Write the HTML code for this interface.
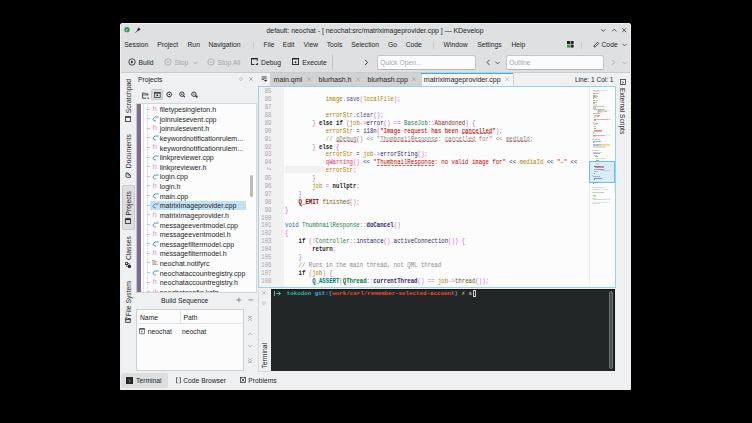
<!DOCTYPE html><html><head><meta charset="utf-8"><style>
html,body{margin:0;padding:0;background:#000;width:752px;height:423px;overflow:hidden}
body{position:relative;font-family:"Liberation Sans",sans-serif}
div{position:absolute;box-sizing:border-box}
.t{white-space:pre}
svg{position:absolute;overflow:visible}

</style></head><body>
<div style="left:120px;top:23px;width:511px;height:366.8px;background:#dee0e2;border:1px solid #eceeef;border-radius:2px 2px 0 0"></div>
<svg style="left:123.5px;top:27.3px" width="7" height="7"><circle cx="3" cy="2.7" r="2.65" fill="#2a9a4c"/><path d="M2.2 4.3 Q2.1 2.5 3.9 2.3" stroke="#e8f6ec" stroke-width="0.75" fill="none"/></svg>
<svg style="left:134.5px;top:26.8px" width="7" height="7"><path d="M0.6 5.6 L2.4 3.8" stroke="#232627" stroke-width="0.8"/><path d="M1.8 3 L3.6 1.2 L4.8 2.4 L3 4.2 Z" fill="#232627"/><path d="M3.2 0.8 L5.2 2.8" stroke="#232627" stroke-width="1.1"/></svg>
<div class="t" style="left:266.5px;top:25.50px;font-size:6.93px;line-height:10px;color:#232627;">default: neochat - [ neochat:src/matriximageprovider.cpp ] — KDevelop</div>
<svg style="left:600px;top:27px" width="32" height="7" fill="none" stroke="#3b3e40" stroke-width="0.85"><path d="M1.1 2.2 L3.3 4.4 L5.5 2.2"/><path d="M12.1 4.4 L14.3 2.2 L16.5 4.4"/><path d="M22.2 1.2 L26.2 5.2 M26.2 1.2 L22.2 5.2"/></svg>
<div class="t" style="left:124.3px;top:39.50px;font-size:6.75px;line-height:10px;color:#232627;">Session</div>
<div class="t" style="left:157.2px;top:39.50px;font-size:6.75px;line-height:10px;color:#232627;">Project</div>
<div class="t" style="left:187.5px;top:39.50px;font-size:6.75px;line-height:10px;color:#232627;">Run</div>
<div class="t" style="left:208.5px;top:39.50px;font-size:6.75px;line-height:10px;color:#232627;">Navigation</div>
<div class="t" style="left:263.6px;top:39.50px;font-size:6.75px;line-height:10px;color:#232627;">File</div>
<div class="t" style="left:282.8px;top:39.50px;font-size:6.75px;line-height:10px;color:#232627;">Edit</div>
<div class="t" style="left:303.5px;top:39.50px;font-size:6.75px;line-height:10px;color:#232627;">View</div>
<div class="t" style="left:326.70000000000005px;top:39.50px;font-size:6.75px;line-height:10px;color:#232627;">Tools</div>
<div class="t" style="left:351.3px;top:39.50px;font-size:6.75px;line-height:10px;color:#232627;">Selection</div>
<div class="t" style="left:388.1px;top:39.50px;font-size:6.75px;line-height:10px;color:#232627;">Go</div>
<div class="t" style="left:405.70000000000005px;top:39.50px;font-size:6.75px;line-height:10px;color:#232627;">Code</div>
<div class="t" style="left:443.6px;top:39.50px;font-size:6.75px;line-height:10px;color:#232627;">Window</div>
<div class="t" style="left:477.20000000000005px;top:39.50px;font-size:6.75px;line-height:10px;color:#232627;">Settings</div>
<div class="t" style="left:511.40000000000003px;top:39.50px;font-size:6.75px;line-height:10px;color:#232627;">Help</div>
<div style="left:252.5px;top:42px;width:1px;height:6.5px;background:#c9cbcd"></div>
<div style="left:432.8px;top:42px;width:1px;height:6.5px;background:#c9cbcd"></div>
<div style="left:580.8px;top:42px;width:1px;height:6.5px;background:#c9cbcd"></div>
<svg style="left:567px;top:40.5px" width="7" height="7"><rect x="0" y="0" width="3" height="3" fill="#232627"/><rect x="3.6" y="0" width="3" height="3" fill="#232627"/><rect x="0" y="3.6" width="3" height="3" fill="#27a33b"/><rect x="3.6" y="3.6" width="3" height="3" fill="#232627"/></svg>
<svg style="left:592.5px;top:41px" width="7" height="7"><path d="M1 6 L1.4 4.4 L4.6 1.2 L5.8 2.4 L2.6 5.6 Z" fill="none" stroke="#232627" stroke-width="0.8"/></svg>
<div class="t" style="left:601.5px;top:39.50px;font-size:6.75px;line-height:10px;color:#232627;">Code</div>
<svg style="left:622px;top:43px" width="6" height="4" fill="none" stroke="#3b3e40" stroke-width="0.8"><path d="M0.5 0.8 L2.6 2.9 L4.7 0.8"/></svg>
<svg style="left:128px;top:58.3px" width="8" height="8"><circle cx="4" cy="4" r="3.2" fill="none" stroke="#232627" stroke-width="0.8"/><path d="M3 2.5 L5.4 4 L3 5.5 Z" fill="#232627"/></svg>
<div class="t" style="left:138.6px;top:58.20px;font-size:6.75px;line-height:10px;color:#232627;">Build</div>
<svg style="left:164px;top:58.3px" width="8" height="8"><circle cx="4" cy="4" r="3.2" fill="none" stroke="#a5a7a9" stroke-width="0.8"/><path d="M2.6 4 H5.4" stroke="#a5a7a9" stroke-width="0.8"/></svg>
<div class="t" style="left:174.4px;top:58.20px;font-size:6.75px;line-height:10px;color:#a5a7a9;">Stop</div>
<svg style="left:193px;top:61px" width="6" height="4" fill="none" stroke="#a5a7a9" stroke-width="0.8"><path d="M0.5 0.8 L2.6 2.9 L4.7 0.8"/></svg>
<svg style="left:207px;top:58.3px" width="8" height="8"><circle cx="4" cy="4" r="3.2" fill="none" stroke="#a5a7a9" stroke-width="0.8"/><path d="M2.6 4 H5.4" stroke="#a5a7a9" stroke-width="0.8"/></svg>
<div class="t" style="left:217.4px;top:58.20px;font-size:6.75px;line-height:10px;color:#a5a7a9;">Stop All</div>
<svg style="left:251px;top:58.4px" width="8" height="8" fill="#232627"><rect x="0" y="0" width="6.6" height="1.4"/><rect x="0" y="0" width="0.9" height="7"/><rect x="0" y="6.1" width="3.4" height="0.9"/><rect x="5.7" y="0" width="0.9" height="3"/><path d="M4.3 7 L6.8 7 L6.8 4.5 Z"/></svg>
<div class="t" style="left:261.1px;top:58.20px;font-size:6.75px;line-height:10px;color:#232627;">Debug</div>
<svg style="left:292px;top:58.4px" width="8" height="8" fill="#232627"><rect x="0" y="0" width="7" height="1.4"/><rect x="0" y="0" width="0.9" height="7"/><rect x="0" y="6.1" width="7" height="0.9"/><rect x="6.1" y="0" width="0.9" height="7"/><rect x="2.7" y="3.5" width="1.6" height="1.6"/></svg>
<div class="t" style="left:302.3px;top:58.20px;font-size:6.75px;line-height:10px;color:#232627;">Execute</div>
<div style="left:332px;top:54px;width:1px;height:15.5px;background:#c3c5c7"></div>
<svg style="left:364px;top:59px" width="5" height="7" fill="none" stroke="#232627" stroke-width="0.9"><path d="M1 0.8 L3.6 3.4 L1 6"/></svg>
<div style="left:376.8px;top:54.5px;width:99.2px;height:15px;background:#fcfcfc;border:1px solid #c2c4c6;border-bottom-color:#b4b6b8;border-radius:2.5px"></div>
<div class="t" style="left:380.3px;top:58.00px;font-size:6.75px;line-height:10px;color:#a5a7a9;">Quick Open...</div>
<svg style="left:485.5px;top:59px" width="5" height="7" fill="none" stroke="#3b3e40" stroke-width="0.9"><path d="M3.6 0.8 L1 3.4 L3.6 6"/></svg>
<svg style="left:495px;top:61px" width="6" height="4" fill="none" stroke="#3b3e40" stroke-width="0.8"><path d="M0.5 0.8 L2.6 2.9 L4.7 0.8"/></svg>
<div style="left:505.5px;top:54.5px;width:98px;height:15px;background:#fcfcfc;border:1px solid #c2c4c6;border-bottom-color:#b4b6b8;border-radius:2.5px"></div>
<div class="t" style="left:509px;top:58.00px;font-size:6.75px;line-height:10px;color:#a5a7a9;">Outline</div>
<svg style="left:611px;top:59px" width="5" height="7" fill="none" stroke="#a5a7a9" stroke-width="0.9"><path d="M1 0.8 L3.6 3.4 L1 6"/></svg>
<svg style="left:621.5px;top:61px" width="6" height="4" fill="none" stroke="#a5a7a9" stroke-width="0.8"><path d="M0.5 0.8 L2.6 2.9 L4.7 0.8"/></svg>
<div style="left:121px;top:72px;width:509px;height:316.8px;background:#eff0f1;border-top:1px solid #c9cbcd"></div>
<div class="t" style="left:128.5px;top:79px;width:0;height:0;"><div style="position:absolute;left:0;top:0;transform-origin:0 0;transform:rotate(-90deg) translate(-100%,-50%);font-size:6.75px;line-height:10px;color:#232627;white-space:pre">Scratchpad</div></div>
<div class="t" style="left:128.5px;top:134px;width:0;height:0;"><div style="position:absolute;left:0;top:0;transform-origin:0 0;transform:rotate(-90deg) translate(-100%,-50%);font-size:6.75px;line-height:10px;color:#232627;white-space:pre">Documents</div></div>
<div style="left:121.7px;top:185.4px;width:13px;height:44.5px;background:#dcdee0;border:1px solid #c8cacc;border-radius:2px"></div>
<div class="t" style="left:128.5px;top:191px;width:0;height:0;"><div style="position:absolute;left:0;top:0;transform-origin:0 0;transform:rotate(-90deg) translate(-100%,-50%);font-size:6.75px;line-height:10px;color:#232627;white-space:pre">Projects</div></div>
<div class="t" style="left:128.5px;top:236.3px;width:0;height:0;"><div style="position:absolute;left:0;top:0;transform-origin:0 0;transform:rotate(-90deg) translate(-100%,-50%);font-size:6.75px;line-height:10px;color:#232627;white-space:pre">Classes</div></div>
<div class="t" style="left:128.5px;top:280.7px;width:0;height:0;"><div style="position:absolute;left:0;top:0;transform-origin:0 0;transform:rotate(-90deg) translate(-100%,-50%);font-size:6.75px;line-height:10px;color:#232627;white-space:pre">File System</div></div>
<svg style="left:125px;top:116px" width="6" height="6" stroke="#232627" stroke-width="0.8"><rect x="0.6" y="0.6" width="4.8" height="5" fill="none"/><path d="M0.6 1.2 H5.4" stroke-width="1"/><path d="M2.6 3.4 L4.6 2.4 V4.6 Z" fill="#fff" stroke="none"/></svg>
<svg style="left:125px;top:172px" width="6" height="6" stroke="#232627" stroke-width="0.8"><path d="M1 1 H3 L5.4 3.2 V5.4 H2.2 Q1 5.4 1 4.2 Z" fill="none"/><path d="M3 1 V3.2 H5.4" fill="none" stroke-width="0.6"/></svg>
<svg style="left:125px;top:218.2px" width="6" height="6" stroke="#232627" stroke-width="0.8"><rect x="0.6" y="0.6" width="4.8" height="5" fill="none"/><path d="M0.6 1.4 H5.4" stroke-width="1.3"/></svg>
<svg style="left:125px;top:262.2px" width="6" height="6" stroke="#232627" stroke-width="0.8"><rect x="0.6" y="0.6" width="2" height="2" fill="none"/><rect x="3.4" y="3.4" width="2" height="2" fill="#232627"/><path d="M1.6 2.6 V4.4 H3.4 M2.6 1.6 H4.4 V3.4" fill="none" stroke-width="0.6"/></svg>
<svg style="left:125px;top:317.2px" width="6" height="6" stroke="#232627" stroke-width="0.8"><path d="M0.6 0.8 H2.4 L3 1.6 H5.4 V5.4 H0.6 Z" fill="none"/><path d="M0.6 2.6 H5.4" stroke-width="0.9"/></svg>
<div style="left:136.5px;top:72.5px;width:120px;height:220px;background:#eff0f1"></div>
<div class="t" style="left:138px;top:74.50px;font-size:6.75px;line-height:10px;color:#232627;">Projects</div>
<svg style="left:238.6px;top:77px" width="4" height="4" fill="none" stroke="#9a9c9e" stroke-width="0.6"><path d="M2 0.3 L3.7 2 L2 3.7 L0.3 2 Z"/></svg>
<svg style="left:248.6px;top:76.8px" width="4" height="4" fill="none" stroke="#7c7e80" stroke-width="0.6"><path d="M0.3 0.3 L3.7 3.7 M3.7 0.3 L0.3 3.7"/></svg>
<div style="left:151.2px;top:88.9px;width:11.5px;height:10.7px;background:#d9dbdd;border:0.6px solid #c6c8ca;border-radius:1.5px"></div>
<svg style="left:142px;top:91.5px" width="8" height="8" fill="none" stroke="#232627" stroke-width="0.8"><path d="M0.6 1 H2.8 L3.6 1.9 H6 V3.2 M0.6 1 V6.2 H4"/><path d="M0.6 3 H6" stroke-width="0.6"/><path d="M5.2 5.4 L6.4 6.6 M6.4 5.6 V6.6 H5.4" stroke-width="0.6"/></svg>
<svg style="left:154px;top:91.8px" width="7" height="6" fill="none" stroke="#232627" stroke-width="0.7"><rect x="0.4" y="0.4" width="5.8" height="5"/><path d="M0.4 1.1 H6.2" stroke-width="0.9"/><rect x="2.5" y="2.6" width="1.6" height="1.5" fill="#232627" stroke="none"/></svg>
<svg style="left:166px;top:91.2px" width="7" height="7" fill="none" stroke="#232627" stroke-width="0.9"><circle cx="3.2" cy="3.5" r="2.3"/><circle cx="3.2" cy="3.5" r="0.75" fill="#232627" stroke="none"/><path d="M3.2 0.4 V1 M3.2 6 V6.6 M0.1 3.5 H0.8 M5.6 3.5 H6.3" stroke-width="0.5"/></svg>
<svg style="left:178.5px;top:91.2px" width="7" height="7" fill="none" stroke="#232627" stroke-width="0.9"><circle cx="2.9" cy="3.2" r="2.2"/><circle cx="2.9" cy="3.2" r="0.7" fill="#232627" stroke="none"/><path d="M4.5 4.8 L5.8 6.1" stroke-width="1.1"/></svg>
<svg style="left:190.8px;top:91.2px" width="8" height="7" fill="none" stroke="#232627" stroke-width="0.9"><circle cx="2.9" cy="3.2" r="2.2"/><path d="M2 3.2 H3.8" stroke-width="0.6"/><path d="M4.5 4.8 L5.8 6.1" stroke-width="1.1"/><circle cx="5.9" cy="5.6" r="0.9" stroke-width="0.5"/></svg>
<div style="left:136px;top:103.2px;width:120.8px;height:189.4px;background:#fcfcfc;border:1px solid #d4d6d8;border-left-color:#c4c6c8"></div>
<div style="left:137px;top:104px;width:4px;height:188px;background:#7e6c93"></div>
<div style="left:143.3px;top:104px;width:0.7px;height:188px;background:#e3e4e5"></div>
<div style="left:147px;top:104px;width:0.6px;height:188px;background:#e3e4e5"></div>
<div style="left:137px;top:104px;width:109px;height:188px;overflow:hidden">
<div style="left:10.4px;top:4.50px;width:2.5px;height:0.7px;background:#c0c2c4"></div>
<div class="t" style="left:15.6px;top:-0.10px;font-size:7.8px;line-height:10px;color:#d98be8">h</div>
<div class="t" style="left:22.7px;top:1.10px;font-size:7.05px;line-height:10px;color:#232627">filetypesingleton.h</div>
<div style="left:10.4px;top:14.12px;width:2.5px;height:0.7px;background:#c0c2c4"></div>
<svg style="left:14.5px;top:12.02px" width="7" height="6" fill="none" stroke="#3d86f0" stroke-width="0.95" stroke-linecap="round"><path d="M6.3 1 H3.2 Q1.2 1.8 1 3.5 Q1.1 4.9 3.5 5"/></svg>
<div class="t" style="left:22.7px;top:10.72px;font-size:7.05px;line-height:10px;color:#232627">joinrulesevent.cpp</div>
<div style="left:10.4px;top:23.74px;width:2.5px;height:0.7px;background:#c0c2c4"></div>
<div class="t" style="left:15.6px;top:19.14px;font-size:7.8px;line-height:10px;color:#d98be8">h</div>
<div class="t" style="left:22.7px;top:20.34px;font-size:7.05px;line-height:10px;color:#232627">joinrulesevent.h</div>
<div style="left:10.4px;top:33.36px;width:2.5px;height:0.7px;background:#c0c2c4"></div>
<svg style="left:14.5px;top:31.26px" width="7" height="6" fill="none" stroke="#3d86f0" stroke-width="0.95" stroke-linecap="round"><path d="M6.3 1 H3.2 Q1.2 1.8 1 3.5 Q1.1 4.9 3.5 5"/></svg>
<div class="t" style="left:22.7px;top:29.96px;font-size:7.05px;line-height:10px;color:#232627">keywordnotificationrulem...</div>
<div style="left:10.4px;top:42.98px;width:2.5px;height:0.7px;background:#c0c2c4"></div>
<div class="t" style="left:15.6px;top:38.38px;font-size:7.8px;line-height:10px;color:#d98be8">h</div>
<div class="t" style="left:22.7px;top:39.58px;font-size:7.05px;line-height:10px;color:#232627">keywordnotificationrulem...</div>
<div style="left:10.4px;top:52.60px;width:2.5px;height:0.7px;background:#c0c2c4"></div>
<svg style="left:14.5px;top:50.50px" width="7" height="6" fill="none" stroke="#3d86f0" stroke-width="0.95" stroke-linecap="round"><path d="M6.3 1 H3.2 Q1.2 1.8 1 3.5 Q1.1 4.9 3.5 5"/></svg>
<div class="t" style="left:22.7px;top:49.20px;font-size:7.05px;line-height:10px;color:#232627">linkpreviewer.cpp</div>
<div style="left:10.4px;top:62.22px;width:2.5px;height:0.7px;background:#c0c2c4"></div>
<div class="t" style="left:15.6px;top:57.62px;font-size:7.8px;line-height:10px;color:#d98be8">h</div>
<div class="t" style="left:22.7px;top:58.82px;font-size:7.05px;line-height:10px;color:#232627">linkpreviewer.h</div>
<div style="left:10.4px;top:71.84px;width:2.5px;height:0.7px;background:#c0c2c4"></div>
<svg style="left:14.5px;top:69.74px" width="7" height="6" fill="none" stroke="#3d86f0" stroke-width="0.95" stroke-linecap="round"><path d="M6.3 1 H3.2 Q1.2 1.8 1 3.5 Q1.1 4.9 3.5 5"/></svg>
<div class="t" style="left:22.7px;top:68.44px;font-size:7.05px;line-height:10px;color:#232627">login.cpp</div>
<div style="left:10.4px;top:81.46px;width:2.5px;height:0.7px;background:#c0c2c4"></div>
<div class="t" style="left:15.6px;top:76.86px;font-size:7.8px;line-height:10px;color:#d98be8">h</div>
<div class="t" style="left:22.7px;top:78.06px;font-size:7.05px;line-height:10px;color:#232627">login.h</div>
<div style="left:10.4px;top:91.08px;width:2.5px;height:0.7px;background:#c0c2c4"></div>
<svg style="left:14.5px;top:88.98px" width="7" height="6" fill="none" stroke="#3d86f0" stroke-width="0.95" stroke-linecap="round"><path d="M6.3 1 H3.2 Q1.2 1.8 1 3.5 Q1.1 4.9 3.5 5"/></svg>
<div class="t" style="left:22.7px;top:87.68px;font-size:7.05px;line-height:10px;color:#232627">main.cpp</div>
<div style="left:13px;top:96.90px;width:96.8px;height:9.6px;background:#c4e0f3"></div>
<div style="left:10.4px;top:100.70px;width:2.5px;height:0.7px;background:#c0c2c4"></div>
<svg style="left:14.5px;top:98.60px" width="7" height="6" fill="none" stroke="#3d86f0" stroke-width="0.95" stroke-linecap="round"><path d="M6.3 1 H3.2 Q1.2 1.8 1 3.5 Q1.1 4.9 3.5 5"/></svg>
<div class="t" style="left:22.7px;top:97.30px;font-size:7.05px;line-height:10px;color:#232627">matriximageprovider.cpp</div>
<div style="left:10.4px;top:110.32px;width:2.5px;height:0.7px;background:#c0c2c4"></div>
<div class="t" style="left:15.6px;top:105.72px;font-size:7.8px;line-height:10px;color:#d98be8">h</div>
<div class="t" style="left:22.7px;top:106.92px;font-size:7.05px;line-height:10px;color:#232627">matriximageprovider.h</div>
<div style="left:10.4px;top:119.94px;width:2.5px;height:0.7px;background:#c0c2c4"></div>
<svg style="left:14.5px;top:117.84px" width="7" height="6" fill="none" stroke="#3d86f0" stroke-width="0.95" stroke-linecap="round"><path d="M6.3 1 H3.2 Q1.2 1.8 1 3.5 Q1.1 4.9 3.5 5"/></svg>
<div class="t" style="left:22.7px;top:116.54px;font-size:7.05px;line-height:10px;color:#232627">messageeventmodel.cpp</div>
<div style="left:10.4px;top:129.56px;width:2.5px;height:0.7px;background:#c0c2c4"></div>
<div class="t" style="left:15.6px;top:124.96px;font-size:7.8px;line-height:10px;color:#d98be8">h</div>
<div class="t" style="left:22.7px;top:126.16px;font-size:7.05px;line-height:10px;color:#232627">messageeventmodel.h</div>
<div style="left:10.4px;top:139.18px;width:2.5px;height:0.7px;background:#c0c2c4"></div>
<svg style="left:14.5px;top:137.08px" width="7" height="6" fill="none" stroke="#3d86f0" stroke-width="0.95" stroke-linecap="round"><path d="M6.3 1 H3.2 Q1.2 1.8 1 3.5 Q1.1 4.9 3.5 5"/></svg>
<div class="t" style="left:22.7px;top:135.78px;font-size:7.05px;line-height:10px;color:#232627">messagefiltermodel.cpp</div>
<div style="left:10.4px;top:148.80px;width:2.5px;height:0.7px;background:#c0c2c4"></div>
<div class="t" style="left:15.6px;top:144.20px;font-size:7.8px;line-height:10px;color:#d98be8">h</div>
<div class="t" style="left:22.7px;top:145.40px;font-size:7.05px;line-height:10px;color:#232627">messagefiltermodel.h</div>
<div style="left:10.4px;top:158.42px;width:2.5px;height:0.7px;background:#c0c2c4"></div>
<svg style="left:15px;top:156.22px" width="7" height="6" fill="none" stroke="#6c6e70" stroke-width="0.6"><path d="M0.3 0.5 H3 M0.3 1.8 H5.6 M0.3 3.1 H4.2 M0.3 4.4 H5.6"/></svg>
<div class="t" style="left:22.7px;top:155.02px;font-size:7.05px;line-height:10px;color:#232627">neochat.notifyrc</div>
<div style="left:10.4px;top:168.04px;width:2.5px;height:0.7px;background:#c0c2c4"></div>
<svg style="left:14.5px;top:165.94px" width="7" height="6" fill="none" stroke="#3d86f0" stroke-width="0.95" stroke-linecap="round"><path d="M6.3 1 H3.2 Q1.2 1.8 1 3.5 Q1.1 4.9 3.5 5"/></svg>
<div class="t" style="left:22.7px;top:164.64px;font-size:7.05px;line-height:10px;color:#232627">neochataccountregistry.cpp</div>
<div style="left:10.4px;top:177.66px;width:2.5px;height:0.7px;background:#c0c2c4"></div>
<div class="t" style="left:15.6px;top:173.06px;font-size:7.8px;line-height:10px;color:#d98be8">h</div>
<div class="t" style="left:22.7px;top:174.26px;font-size:7.05px;line-height:10px;color:#232627">neochataccountregistry.h</div>
<div style="left:10.4px;top:187.28px;width:2.5px;height:0.7px;background:#c0c2c4"></div>
<svg style="left:14.5px;top:184.68px" width="7" height="6" fill="none" stroke="#d98be8" stroke-width="0.8"><path d="M2.6 1 L0.8 3 L2.6 5 M3.6 0.4 V5 M3.6 3 Q4.8 2 5.8 3 V5"/></svg>
<div class="t" style="left:22.7px;top:183.88px;font-size:7.05px;line-height:10px;color:#232627">neochatconfig.kcfg</div>
</div>
<div style="left:250px;top:174.7px;width:3px;height:22.5px;background:#b9bbbd;border-radius:1.5px"></div>
<div class="t" style="left:161px;top:295.50px;font-size:6.75px;line-height:10px;color:#232627;">Build Sequence</div>
<svg style="left:235.6px;top:297.3px" width="6" height="6" stroke="#55585a" stroke-width="0.6"><path d="M2.9 0.4 V5.4 M0.4 2.9 H5.4"/></svg>
<svg style="left:247.6px;top:297.3px" width="6" height="6" stroke="#55585a" stroke-width="0.6"><path d="M0.4 2.9 H5.4"/></svg>
<div style="left:136.1px;top:309.2px;width:107.5px;height:62px;background:#fcfcfc;border:1px solid #cdcfd1"></div>
<div style="left:137.5px;top:323px;width:105.5px;height:0.8px;background:#e2e3e4"></div>
<div style="left:180.3px;top:310px;width:0.8px;height:13px;background:#e2e3e4"></div>
<div class="t" style="left:140px;top:312.50px;font-size:6.75px;line-height:10px;color:#232627;">Name</div>
<div class="t" style="left:183.5px;top:312.50px;font-size:6.75px;line-height:10px;color:#232627;">Path</div>
<svg style="left:139px;top:328px" width="7" height="7" fill="none" stroke="#232627" stroke-width="0.6"><rect x="0.4" y="0.5" width="5.2" height="5.2" rx="0.4"/><path d="M0.4 1.1 H5.6" stroke-width="0.9"/><path d="M2.4 2.6 L3.8 3.5 L2.4 4.4 Z" fill="#232627" stroke="none"/></svg>
<div class="t" style="left:147.8px;top:326.80px;font-size:6.75px;line-height:10px;color:#232627;">neochat</div>
<div class="t" style="left:182px;top:326.80px;font-size:6.75px;line-height:10px;color:#232627;">neochat</div>
<svg style="left:247.4px;top:316px" width="6" height="6" fill="none" stroke="#a5a7a9" stroke-width="0.7"><path d="M1 3 L3 1 L5 3 M1 5 L3 3 L5 5 M1 0.6 H5"/></svg>
<svg style="left:247.4px;top:331px" width="6" height="6" fill="none" stroke="#a5a7a9" stroke-width="0.7"><path d="M1 4 L3 2 L5 4"/></svg>
<svg style="left:247.4px;top:343.3px" width="6" height="6" fill="none" stroke="#a5a7a9" stroke-width="0.7"><path d="M1 2 L3 4 L5 2"/></svg>
<svg style="left:247.4px;top:356.8px" width="6" height="6" fill="none" stroke="#a5a7a9" stroke-width="0.7"><path d="M1 1 L3 3 L5 1 M1 3 L3 5 L5 3 M1 5.4 H5"/></svg>
<div style="left:257px;top:72.5px;width:359px;height:14px;background:#eff0f1"></div>
<div style="left:270px;top:72.7px;width:151px;height:13.4px;background:#d0d2d4"></div>
<svg style="left:261px;top:76.3px" width="7" height="7" fill="none" stroke="#232627" stroke-width="0.7"><path d="M0.6 0.8 H5.6 M0.6 2.2 H5.6 M0.6 3.6 H3"/><path d="M3.2 4 L4.6 5.6 L6 4 Z" fill="#232627" stroke-width="0.4"/></svg>
<div style="left:420.8px;top:72.7px;width:92.2px;height:13.4px;background:#f5f6f6;border-left:0.6px solid #cfd1d3"></div>
<div style="left:420.8px;top:72.7px;width:92.2px;height:1.3px;background:#3daee9"></div>
<div style="left:512.6px;top:73px;width:0.8px;height:13px;background:#cfd1d3"></div>
<div class="t" style="left:273.6px;top:74.60px;font-size:7.05px;line-height:10px;color:#232627;">main.qml</div>
<svg style="left:306.8px;top:77.3px" width="5" height="5" stroke="#8e9092" stroke-width="0.5"><path d="M0.3 0.3 L4 4 M4 0.3 L0.3 4"/></svg>
<div class="t" style="left:318.6px;top:74.60px;font-size:7.05px;line-height:10px;color:#232627;">blurhash.h</div>
<svg style="left:355.6px;top:77.3px" width="5" height="5" stroke="#8e9092" stroke-width="0.5"><path d="M0.3 0.3 L4 4 M4 0.3 L0.3 4"/></svg>
<div class="t" style="left:367.6px;top:74.60px;font-size:7.05px;line-height:10px;color:#232627;">blurhash.cpp</div>
<svg style="left:412.3px;top:77.3px" width="5" height="5" stroke="#8e9092" stroke-width="0.5"><path d="M0.3 0.3 L4 4 M4 0.3 L0.3 4"/></svg>
<div class="t" style="left:423.8px;top:74.60px;font-size:7.05px;line-height:10px;color:#232627;">matriximageprovider.cpp</div>
<svg style="left:504.90000000000003px;top:77.3px" width="5" height="5" stroke="#8e9092" stroke-width="0.5"><path d="M0.3 0.3 L4 4 M4 0.3 L0.3 4"/></svg>
<div class="t" style="left:540px;width:73.5px;text-align:right;top:74.6px;font-size:6.55px;line-height:10px;color:#232627">Line: 1 Col: 1</div>
<div style="left:258px;top:86.2px;width:358px;height:201.5px;background:#fcfcfc;border:1px solid #93d2f2"></div>
<div style="left:259px;top:87.2px;width:24.5px;height:199.5px;background:#f1f1f1"></div>
<div style="left:259px;top:87.2px;width:356px;height:199px;overflow:hidden">
<div class="t" style="left:0;width:12.5px;text-align:right;top:1.10px;font-family:'Liberation Mono', monospace;font-size:6.6px;line-height:8px;color:#a6a6a6;transform-origin:100% 50%;transform:scaleX(0.8586)">85</div>
<div class="t" style="left:0;width:12.5px;text-align:right;top:8.99px;font-family:'Liberation Mono', monospace;font-size:6.6px;line-height:8px;color:#a6a6a6;transform-origin:100% 50%;transform:scaleX(0.8586)">86</div>
<div class="t" style="left:25.5px;top:8.99px;font-family:'Liberation Mono', monospace;font-size:6.6px;line-height:8px;transform-origin:0 50%;transform:scaleX(0.8586)">            <span style="color:#b08000">image</span><span style="color:#ca60ca">.</span><span style="color:#644a9b">save</span><span style="color:#ca60ca">(</span><span style="color:#b08000">localFile</span><span style="color:#ca60ca">);</span></div>
<div class="t" style="left:0;width:12.5px;text-align:right;top:16.88px;font-family:'Liberation Mono', monospace;font-size:6.6px;line-height:8px;color:#a6a6a6;transform-origin:100% 50%;transform:scaleX(0.8586)">87</div>
<div class="t" style="left:0;width:12.5px;text-align:right;top:24.77px;font-family:'Liberation Mono', monospace;font-size:6.6px;line-height:8px;color:#a6a6a6;transform-origin:100% 50%;transform:scaleX(0.8586)">88</div>
<div class="t" style="left:25.5px;top:24.77px;font-family:'Liberation Mono', monospace;font-size:6.6px;line-height:8px;transform-origin:0 50%;transform:scaleX(0.8586)">            <span style="color:#b08000">errorStr</span><span style="color:#ca60ca">.</span><span style="color:#644a9b">clear</span><span style="color:#ca60ca">();</span></div>
<div class="t" style="left:0;width:12.5px;text-align:right;top:32.66px;font-family:'Liberation Mono', monospace;font-size:6.6px;line-height:8px;color:#a6a6a6;transform-origin:100% 50%;transform:scaleX(0.8586)">89</div>
<div class="t" style="left:25.5px;top:32.66px;font-family:'Liberation Mono', monospace;font-size:6.6px;line-height:8px;transform-origin:0 50%;transform:scaleX(0.8586)">        <span style="color:#ca60ca">}</span> <span style="color:#1f1c1b;font-weight:bold">else if</span> <span style="color:#ca60ca">(</span><span style="color:#b08000">job</span><span style="color:#ca60ca">-&gt;</span><span style="color:#2b2572">error</span><span style="color:#ca60ca">()</span> <span style="color:#ca60ca">==</span> <span style="color:#1d7f48">BaseJob</span><span style="color:#ca60ca">::</span><span style="color:#8a2a2a">Abandoned</span><span style="color:#ca60ca">)</span> <span style="color:#ca60ca">{</span></div>
<div class="t" style="left:0;width:12.5px;text-align:right;top:40.55px;font-family:'Liberation Mono', monospace;font-size:6.6px;line-height:8px;color:#a6a6a6;transform-origin:100% 50%;transform:scaleX(0.8586)">90</div>
<div class="t" style="left:25.5px;top:40.55px;font-family:'Liberation Mono', monospace;font-size:6.6px;line-height:8px;transform-origin:0 50%;transform:scaleX(0.8586)">            <span style="color:#b08000">errorStr</span> <span style="color:#2b2572">=</span> <span style="color:#2b2572">i18n</span><span style="color:#ca60ca">(</span><span style="color:#bf0303;-webkit-text-stroke:0.08px #bf0303">&quot;Image request has been </span><span style="color:#bf0303;-webkit-text-stroke:0.08px #bf0303;background:repeating-linear-gradient(90deg,#e04848 0 0.9px,rgba(232,90,90,0.45) 0.9px 1.6px) 0 5.7px/100% 0.9px no-repeat">cancelled</span><span style="color:#bf0303;-webkit-text-stroke:0.08px #bf0303">&quot;</span><span style="color:#ca60ca">);</span></div>
<div class="t" style="left:0;width:12.5px;text-align:right;top:48.44px;font-family:'Liberation Mono', monospace;font-size:6.6px;line-height:8px;color:#a6a6a6;transform-origin:100% 50%;transform:scaleX(0.8586)">91</div>
<div class="t" style="left:25.5px;top:48.44px;font-family:'Liberation Mono', monospace;font-size:6.6px;line-height:8px;transform-origin:0 50%;transform:scaleX(0.8586)">            <span style="color:#898887">// </span><span style="color:#898887;background:repeating-linear-gradient(90deg,#e04848 0 0.9px,rgba(232,90,90,0.45) 0.9px 1.6px) 0 5.7px/100% 0.9px no-repeat">qDebug</span><span style="color:#898887">() &lt;&lt; &quot;</span><span style="color:#898887;background:repeating-linear-gradient(90deg,#e04848 0 0.9px,rgba(232,90,90,0.45) 0.9px 1.6px) 0 5.7px/100% 0.9px no-repeat">ThumbnailResponse</span><span style="color:#898887">: </span><span style="color:#898887;background:repeating-linear-gradient(90deg,#e04848 0 0.9px,rgba(232,90,90,0.45) 0.9px 1.6px) 0 5.7px/100% 0.9px no-repeat">cancelled</span><span style="color:#898887"> for&quot; &lt;&lt; </span><span style="color:#898887;background:repeating-linear-gradient(90deg,#e04848 0 0.9px,rgba(232,90,90,0.45) 0.9px 1.6px) 0 5.7px/100% 0.9px no-repeat">mediaId</span><span style="color:#898887">;</span></div>
<div class="t" style="left:0;width:12.5px;text-align:right;top:56.33px;font-family:'Liberation Mono', monospace;font-size:6.6px;line-height:8px;color:#a6a6a6;transform-origin:100% 50%;transform:scaleX(0.8586)">92</div>
<div class="t" style="left:25.5px;top:56.33px;font-family:'Liberation Mono', monospace;font-size:6.6px;line-height:8px;transform-origin:0 50%;transform:scaleX(0.8586)">        <span style="color:#ca60ca">}</span> <span style="color:#1f1c1b;font-weight:bold">else</span> <span style="color:#ca60ca">{</span></div>
<div class="t" style="left:0;width:12.5px;text-align:right;top:64.22px;font-family:'Liberation Mono', monospace;font-size:6.6px;line-height:8px;color:#a6a6a6;transform-origin:100% 50%;transform:scaleX(0.8586)">93</div>
<div class="t" style="left:25.5px;top:64.22px;font-family:'Liberation Mono', monospace;font-size:6.6px;line-height:8px;transform-origin:0 50%;transform:scaleX(0.8586)">            <span style="color:#b08000">errorStr</span> <span style="color:#2b2572">=</span> <span style="color:#b08000">job</span><span style="color:#ca60ca">-&gt;</span><span style="color:#2b2572">errorString</span><span style="color:#ca60ca">();</span></div>
<div class="t" style="left:0;width:12.5px;text-align:right;top:72.11px;font-family:'Liberation Mono', monospace;font-size:6.6px;line-height:8px;color:#a6a6a6;transform-origin:100% 50%;transform:scaleX(0.8586)">94</div>
<div class="t" style="left:25.5px;top:72.11px;font-family:'Liberation Mono', monospace;font-size:6.6px;line-height:8px;transform-origin:0 50%;transform:scaleX(0.8586)">            <span style="color:#d03a6a">qWarning</span><span style="color:#ca60ca">()</span> <span style="color:#2b2572">&lt;&lt;</span> <span style="color:#bf0303">&quot;</span><span style="color:#bf0303;background:repeating-linear-gradient(90deg,#e04848 0 0.9px,rgba(232,90,90,0.45) 0.9px 1.6px) 0 5.7px/100% 0.9px no-repeat">ThumbnailResponse</span><span style="color:#bf0303">: no valid image for&quot;</span> <span style="color:#2b2572">&lt;&lt;</span> <span style="color:#b08000">mediaId</span> <span style="color:#2b2572">&lt;&lt;</span> <span style="color:#bf0303">&quot;-&quot;</span> <span style="color:#2b2572">&lt;&lt;</span></div>
<div style="left:25.5px;top:78.40px;width:40px;height:7.9px;background:#f1f1f1"></div>
<svg style="left:8px;top:80px" width="5" height="4" fill="none" stroke="#9a9a9a" stroke-width="0.55"><path d="M0.6 0.3 V2.2 H3.6"/><path d="M2.8 1.5 L3.7 2.2 L2.8 2.9"/></svg>
<div class="t" style="left:25.5px;top:80.00px;font-family:'Liberation Mono', monospace;font-size:6.6px;line-height:8px;transform-origin:0 50%;transform:scaleX(0.8586)">            <span style="color:#b08000">errorStr</span><span style="color:#ca60ca">;</span></div>
<div class="t" style="left:0;width:12.5px;text-align:right;top:87.89px;font-family:'Liberation Mono', monospace;font-size:6.6px;line-height:8px;color:#a6a6a6;transform-origin:100% 50%;transform:scaleX(0.8586)">95</div>
<div class="t" style="left:25.5px;top:87.89px;font-family:'Liberation Mono', monospace;font-size:6.6px;line-height:8px;transform-origin:0 50%;transform:scaleX(0.8586)">        <span style="color:#ca60ca">}</span></div>
<div class="t" style="left:0;width:12.5px;text-align:right;top:95.78px;font-family:'Liberation Mono', monospace;font-size:6.6px;line-height:8px;color:#a6a6a6;transform-origin:100% 50%;transform:scaleX(0.8586)">96</div>
<div class="t" style="left:25.5px;top:95.78px;font-family:'Liberation Mono', monospace;font-size:6.6px;line-height:8px;transform-origin:0 50%;transform:scaleX(0.8586)">        <span style="color:#b08000">job</span> <span style="color:#ca60ca">=</span> <span style="color:#1f1c1b;font-weight:bold">nullptr</span><span style="color:#ca60ca">;</span></div>
<div class="t" style="left:0;width:12.5px;text-align:right;top:103.67px;font-family:'Liberation Mono', monospace;font-size:6.6px;line-height:8px;color:#a6a6a6;transform-origin:100% 50%;transform:scaleX(0.8586)">97</div>
<div class="t" style="left:25.5px;top:103.67px;font-family:'Liberation Mono', monospace;font-size:6.6px;line-height:8px;transform-origin:0 50%;transform:scaleX(0.8586)">    <span style="color:#ca60ca">}</span></div>
<div class="t" style="left:0;width:12.5px;text-align:right;top:111.56px;font-family:'Liberation Mono', monospace;font-size:6.6px;line-height:8px;color:#a6a6a6;transform-origin:100% 50%;transform:scaleX(0.8586)">98</div>
<div class="t" style="left:25.5px;top:111.56px;font-family:'Liberation Mono', monospace;font-size:6.6px;line-height:8px;transform-origin:0 50%;transform:scaleX(0.8586)">    <span style="color:#8e0000;font-weight:bold">Q_EMIT</span> <span style="color:#6b5a1e">finished</span><span style="color:#ca60ca">();</span></div>
<div class="t" style="left:0;width:12.5px;text-align:right;top:119.45px;font-family:'Liberation Mono', monospace;font-size:6.6px;line-height:8px;color:#a6a6a6;transform-origin:100% 50%;transform:scaleX(0.8586)">99</div>
<div class="t" style="left:25.5px;top:119.45px;font-family:'Liberation Mono', monospace;font-size:6.6px;line-height:8px;transform-origin:0 50%;transform:scaleX(0.8586)"><span style="color:#ca60ca">}</span></div>
<div class="t" style="left:0;width:12.5px;text-align:right;top:127.34px;font-family:'Liberation Mono', monospace;font-size:6.6px;line-height:8px;color:#a6a6a6;transform-origin:100% 50%;transform:scaleX(0.8586)">100</div>
<div class="t" style="left:0;width:12.5px;text-align:right;top:135.23px;font-family:'Liberation Mono', monospace;font-size:6.6px;line-height:8px;color:#a6a6a6;transform-origin:100% 50%;transform:scaleX(0.8586)">101</div>
<div class="t" style="left:25.5px;top:135.23px;font-family:'Liberation Mono', monospace;font-size:6.6px;line-height:8px;transform-origin:0 50%;transform:scaleX(0.8586)"><span style="color:#1f5fc0">void</span> <span style="color:#1d7f48">ThumbnailResponse</span><span style="color:#ca60ca">::</span><span style="color:#2b2572;font-weight:bold">doCancel</span><span style="color:#ca60ca">()</span></div>
<div class="t" style="left:0;width:12.5px;text-align:right;top:143.12px;font-family:'Liberation Mono', monospace;font-size:6.6px;line-height:8px;color:#a6a6a6;transform-origin:100% 50%;transform:scaleX(0.8586)">102</div>
<div class="t" style="left:25.5px;top:143.12px;font-family:'Liberation Mono', monospace;font-size:6.6px;line-height:8px;transform-origin:0 50%;transform:scaleX(0.8586)"><span style="color:#ca60ca">{</span></div>
<div class="t" style="left:0;width:12.5px;text-align:right;top:151.01px;font-family:'Liberation Mono', monospace;font-size:6.6px;line-height:8px;color:#a6a6a6;transform-origin:100% 50%;transform:scaleX(0.8586)">103</div>
<div class="t" style="left:25.5px;top:151.01px;font-family:'Liberation Mono', monospace;font-size:6.6px;line-height:8px;transform-origin:0 50%;transform:scaleX(0.8586)">    <span style="color:#1f1c1b;font-weight:bold">if</span> <span style="color:#ca60ca">(!</span><span style="color:#1d7f48">Controller</span><span style="color:#ca60ca">::</span><span style="color:#2b2572">instance</span><span style="color:#ca60ca">().</span><span style="color:#2b2572">activeConnection</span><span style="color:#ca60ca">())</span> <span style="color:#ca60ca">{</span></div>
<div class="t" style="left:0;width:12.5px;text-align:right;top:158.90px;font-family:'Liberation Mono', monospace;font-size:6.6px;line-height:8px;color:#a6a6a6;transform-origin:100% 50%;transform:scaleX(0.8586)">104</div>
<div class="t" style="left:25.5px;top:158.90px;font-family:'Liberation Mono', monospace;font-size:6.6px;line-height:8px;transform-origin:0 50%;transform:scaleX(0.8586)">        <span style="color:#1f1c1b;font-weight:bold">return</span><span style="color:#ca60ca">;</span></div>
<div class="t" style="left:0;width:12.5px;text-align:right;top:166.79px;font-family:'Liberation Mono', monospace;font-size:6.6px;line-height:8px;color:#a6a6a6;transform-origin:100% 50%;transform:scaleX(0.8586)">105</div>
<div class="t" style="left:25.5px;top:166.79px;font-family:'Liberation Mono', monospace;font-size:6.6px;line-height:8px;transform-origin:0 50%;transform:scaleX(0.8586)">    <span style="color:#ca60ca">}</span></div>
<div class="t" style="left:0;width:12.5px;text-align:right;top:174.68px;font-family:'Liberation Mono', monospace;font-size:6.6px;line-height:8px;color:#a6a6a6;transform-origin:100% 50%;transform:scaleX(0.8586)">106</div>
<div class="t" style="left:25.5px;top:174.68px;font-family:'Liberation Mono', monospace;font-size:6.6px;line-height:8px;transform-origin:0 50%;transform:scaleX(0.8586)">    <span style="color:#898887">// Runs in the main thread, not QML thread</span></div>
<div class="t" style="left:0;width:12.5px;text-align:right;top:182.57px;font-family:'Liberation Mono', monospace;font-size:6.6px;line-height:8px;color:#a6a6a6;transform-origin:100% 50%;transform:scaleX(0.8586)">107</div>
<div class="t" style="left:25.5px;top:182.57px;font-family:'Liberation Mono', monospace;font-size:6.6px;line-height:8px;transform-origin:0 50%;transform:scaleX(0.8586)">    <span style="color:#1f1c1b;font-weight:bold">if</span> <span style="color:#ca60ca">(</span><span style="color:#b08000">job</span><span style="color:#ca60ca">)</span> <span style="color:#ca60ca">{</span></div>
<div class="t" style="left:0;width:12.5px;text-align:right;top:190.46px;font-family:'Liberation Mono', monospace;font-size:6.6px;line-height:8px;color:#a6a6a6;transform-origin:100% 50%;transform:scaleX(0.8586)">108</div>
<div class="t" style="left:25.5px;top:190.46px;font-family:'Liberation Mono', monospace;font-size:6.6px;line-height:8px;transform-origin:0 50%;transform:scaleX(0.8586)">        <span style="color:#007a78;font-weight:bold">Q_ASSERT</span><span style="color:#ca60ca">(</span><span style="color:#0b6a30;font-weight:bold">QThread</span><span style="color:#ca60ca">::</span><span style="color:#2b2572;font-weight:bold">currentThread</span><span style="color:#ca60ca">()</span> <span style="color:#ca60ca">==</span> <span style="color:#b08000">job</span><span style="color:#ca60ca">-&gt;</span><span style="color:#6b5a1e">thread</span><span style="color:#ca60ca">());</span></div>
<div class="t" style="left:0;width:12.5px;text-align:right;top:198.35px;font-family:'Liberation Mono', monospace;font-size:6.6px;line-height:8px;color:#a6a6a6;transform-origin:100% 50%;transform:scaleX(0.8586)">109</div>
<div class="t" style="left:25.5px;top:198.35px;font-family:'Liberation Mono', monospace;font-size:6.6px;line-height:8px;transform-origin:0 50%;transform:scaleX(0.8586)">        <span style="color:#b08000">job</span><span style="color:#ca60ca">-&gt;</span><span style="color:#644a9b">abandon</span><span style="color:#ca60ca">();</span></div>
</div>
<div style="left:589px;top:87.2px;width:0.6px;height:199px;background:#ececec"></div>
<div style="left:589.2px;top:161.3px;width:25.6px;height:22px;background:rgba(61,174,233,0.18);border:1px solid #6ec0ec"></div>
<div style="left:592.5px;top:89.55px;width:6.0px;height:0.9px;background:#d9a0e6;opacity:0.62"></div>
<div style="left:598.5px;top:89.55px;width:8.0px;height:0.9px;background:#cfcfcf;opacity:0.62"></div>
<div style="left:592.5px;top:90.55px;width:7.5px;height:0.9px;background:#e6b8ee;opacity:0.62"></div>
<div style="left:592.5px;top:92.85px;width:2.5px;height:0.9px;background:#3a9a5a;opacity:0.62"></div>
<div style="left:595px;top:92.85px;width:4px;height:0.9px;background:#f08a40;opacity:0.62"></div>
<div style="left:592.5px;top:94.75px;width:2.5px;height:0.9px;background:#3a9a5a;opacity:0.62"></div>
<div style="left:595px;top:94.75px;width:2px;height:0.9px;background:#f08a40;opacity:0.62"></div>
<div style="left:592.5px;top:95.75px;width:2.5px;height:0.9px;background:#3a9a5a;opacity:0.62"></div>
<div style="left:595px;top:95.75px;width:3px;height:0.9px;background:#f08a40;opacity:0.62"></div>
<div style="left:592.5px;top:96.75px;width:2.0px;height:0.9px;background:#3a9a5a;opacity:0.62"></div>
<div style="left:594.5px;top:96.75px;width:2.5px;height:0.9px;background:#f0a060;opacity:0.62"></div>
<div style="left:592.5px;top:97.75px;width:1.5px;height:0.9px;background:#5aa070;opacity:0.62"></div>
<div style="left:592.5px;top:99.85px;width:2.5px;height:0.9px;background:#3a9a5a;opacity:0.62"></div>
<div style="left:595px;top:99.85px;width:3px;height:0.9px;background:#f08a40;opacity:0.62"></div>
<div style="left:592.5px;top:101.75px;width:2.0px;height:0.9px;background:#3a9a5a;opacity:0.62"></div>
<div style="left:594.5px;top:101.75px;width:2.5px;height:0.9px;background:#f08a40;opacity:0.62"></div>
<div style="left:592.5px;top:102.75px;width:2.5px;height:0.9px;background:#6aaa80;opacity:0.62"></div>
<div style="left:592.5px;top:104.05px;width:4.5px;height:0.9px;background:#cccccc;opacity:0.62"></div>
<div style="left:592.5px;top:105.05px;width:4.5px;height:0.9px;background:#d0d0d0;opacity:0.62"></div>
<div style="left:592.5px;top:105.85px;width:3.5px;height:0.9px;background:#a8a8d8;opacity:0.62"></div>
<div style="left:596px;top:105.85px;width:8px;height:0.9px;background:#70b870;opacity:0.62"></div>
<div style="left:593px;top:106.95px;width:3px;height:0.9px;background:#c8a848;opacity:0.62"></div>
<div style="left:593px;top:107.85px;width:3px;height:0.9px;background:#c8a848;opacity:0.62"></div>
<div style="left:594px;top:108.85px;width:4px;height:0.9px;background:#50a0a0;opacity:0.62"></div>
<div style="left:598px;top:108.85px;width:7px;height:0.9px;background:#e07878;opacity:0.62"></div>
<div style="left:598px;top:110.15px;width:4px;height:0.9px;background:#50b0a0;opacity:0.62"></div>
<div style="left:602px;top:110.15px;width:8px;height:0.9px;background:#a8e0f0;opacity:0.62"></div>
<div style="left:597px;top:111.05px;width:3px;height:0.9px;background:#50b0a0;opacity:0.62"></div>
<div style="left:600px;top:111.05px;width:5px;height:0.9px;background:#e0c060;opacity:0.62"></div>
<div style="left:605px;top:111.05px;width:2px;height:0.9px;background:#a060d0;opacity:0.62"></div>
<div style="left:597px;top:112.15px;width:5px;height:0.9px;background:#e0c870;opacity:0.62"></div>
<div style="left:593px;top:113.05px;width:7px;height:0.9px;background:#e078a8;opacity:0.62"></div>
<div style="left:594px;top:115.05px;width:3px;height:0.9px;background:#c8a848;opacity:0.62"></div>
<div style="left:597px;top:115.05px;width:3px;height:0.9px;background:#9070c0;opacity:0.62"></div>
<div style="left:594px;top:115.95px;width:3px;height:0.9px;background:#e0c060;opacity:0.62"></div>
<div style="left:597px;top:115.95px;width:2px;height:0.9px;background:#9070c0;opacity:0.62"></div>
<div style="left:594px;top:116.95px;width:2px;height:0.9px;background:#e0c060;opacity:0.62"></div>
<div style="left:594px;top:118.75px;width:2px;height:0.9px;background:#a03040;opacity:0.62"></div>
<div style="left:596px;top:118.75px;width:12px;height:0.9px;background:#e07878;opacity:0.62"></div>
<div style="left:608px;top:118.75px;width:3px;height:0.9px;background:#e0c060;opacity:0.62"></div>
<div style="left:594px;top:119.75px;width:2px;height:0.9px;background:#9070c0;opacity:0.62"></div>
<div style="left:593px;top:121.55px;width:1px;height:0.9px;background:#60a060;opacity:0.62"></div>
<div style="left:593px;top:123.35px;width:2px;height:0.9px;background:#c0c0c0;opacity:0.62"></div>
<div style="left:595px;top:123.35px;width:3px;height:0.9px;background:#9080d0;opacity:0.62"></div>
<div style="left:594px;top:124.35px;width:3px;height:0.9px;background:#e0c060;opacity:0.62"></div>
<div style="left:594px;top:125.55px;width:2px;height:0.9px;background:#e07090;opacity:0.62"></div>
<div style="left:594px;top:127.55px;width:2px;height:0.9px;background:#3a9a5a;opacity:0.62"></div>
<div style="left:594px;top:130.35px;width:2px;height:0.9px;background:#3a9a5a;opacity:0.62"></div>
<div style="left:596px;top:130.35px;width:6px;height:0.9px;background:#e03838;opacity:0.62"></div>
<div style="left:594px;top:131.15px;width:8px;height:0.9px;background:#e07878;opacity:0.62"></div>
<div style="left:593px;top:132.05px;width:1px;height:0.9px;background:#404040;opacity:0.62"></div>
<div style="left:593px;top:135.35px;width:3px;height:0.9px;background:#60a060;opacity:0.62"></div>
<div style="left:596px;top:135.35px;width:9px;height:0.9px;background:#8888e0;opacity:0.62"></div>
<div style="left:605px;top:135.35px;width:6px;height:0.9px;background:#c0e8f8;opacity:0.62"></div>
<div style="left:593px;top:136.25px;width:3px;height:0.9px;background:#a8c8a8;opacity:0.62"></div>
<div style="left:592px;top:138.75px;width:8px;height:0.9px;background:#80c0a0;opacity:0.62"></div>
<div style="left:593px;top:141.05px;width:8px;height:0.9px;background:#8070c0;opacity:0.62"></div>
<div style="left:593px;top:142.05px;width:1px;height:0.9px;background:#404040;opacity:0.62"></div>
<div style="left:593px;top:143.55px;width:8px;height:0.9px;background:#60a8a0;opacity:0.62"></div>
<div style="left:601px;top:143.55px;width:9px;height:0.9px;background:#e0c060;opacity:0.62"></div>
<div style="left:593px;top:144.55px;width:6px;height:0.9px;background:#8888d8;opacity:0.62"></div>
<div style="left:599px;top:144.55px;width:11px;height:0.9px;background:#e0c890;opacity:0.62"></div>
<div style="left:593px;top:145.85px;width:12px;height:0.9px;background:#c8c8c8;opacity:0.62"></div>
<div style="left:593px;top:147.25px;width:3px;height:0.9px;background:#f0c860;opacity:0.62"></div>
<div style="left:596px;top:147.25px;width:10px;height:0.9px;background:#a8d8a8;opacity:0.62"></div>
<div style="left:592px;top:149.95px;width:7px;height:0.9px;background:#c8a8e8;opacity:0.62"></div>
<div style="left:593px;top:151.55px;width:5px;height:0.9px;background:#70c0c0;opacity:0.62"></div>
<div style="left:598px;top:151.55px;width:4px;height:0.9px;background:#e0c060;opacity:0.62"></div>
<div style="left:593px;top:152.55px;width:7px;height:0.9px;background:#7090c8;opacity:0.62"></div>
<div style="left:594px;top:154.85px;width:3px;height:0.9px;background:#c8c048;opacity:0.62"></div>
<div style="left:595px;top:155.75px;width:3px;height:0.9px;background:#6868c8;opacity:0.62"></div>
<div style="left:595px;top:158.05px;width:10px;height:0.9px;background:#a8e0a8;opacity:0.62"></div>
<div style="left:605px;top:158.05px;width:1px;height:0.9px;background:#e0e060;opacity:0.62"></div>
<div style="left:596px;top:160.15px;width:3px;height:0.9px;background:#7060d0;opacity:0.62"></div>
<div style="left:596px;top:162.75px;width:3px;height:0.9px;background:#e0c060;opacity:0.62"></div>
<div style="left:596px;top:164.05px;width:3px;height:0.9px;background:#f0d080;opacity:0.62"></div>
<div style="left:594px;top:166.05px;width:6px;height:0.9px;background:#303080;opacity:0.62"></div>
<div style="left:600px;top:166.05px;width:4px;height:0.9px;background:#c04050;opacity:0.62"></div>
<div style="left:595px;top:167.05px;width:9px;height:0.9px;background:#e05050;opacity:0.62"></div>
<div style="left:594px;top:168.55px;width:4px;height:0.9px;background:#60a060;opacity:0.62"></div>
<div style="left:598px;top:168.55px;width:6px;height:0.9px;background:#6060c0;opacity:0.62"></div>
<div style="left:601px;top:169.95px;width:9px;height:0.9px;background:#e0a8b8;opacity:0.62"></div>
<div style="left:594px;top:170.95px;width:4px;height:0.9px;background:#c0a040;opacity:0.62"></div>
<div style="left:594px;top:172.65px;width:1px;height:0.9px;background:#9a2020;opacity:0.62"></div>
<div style="left:592px;top:174.75px;width:1px;height:0.9px;background:#e080d0;opacity:0.62"></div>
<div style="left:593px;top:176.05px;width:7px;height:0.9px;background:#60a0a0;opacity:0.62"></div>
<div style="left:594px;top:177.85px;width:8px;height:0.9px;background:#5050b0;opacity:0.62"></div>
<div style="left:594px;top:179.05px;width:1px;height:0.9px;background:#404040;opacity:0.62"></div>
<div style="left:596px;top:180.75px;width:9px;height:0.9px;background:#c0e0f0;opacity:0.62"></div>
<div style="left:594px;top:181.95px;width:4px;height:0.9px;background:#30a090;opacity:0.62"></div>
<div style="left:598px;top:181.95px;width:4px;height:0.9px;background:#80c0f0;opacity:0.62"></div>
<div style="left:602px;top:181.95px;width:2px;height:0.9px;background:#e0c060;opacity:0.62"></div>
<div style="left:593px;top:183.25px;width:1px;height:0.9px;background:#303030;opacity:0.62"></div>
<div style="left:592px;top:186.55px;width:9px;height:0.9px;background:#a8d8a8;opacity:0.62"></div>
<div style="left:601px;top:186.55px;width:3px;height:0.9px;background:#c8a8e8;opacity:0.62"></div>
<div style="left:593px;top:189.35px;width:6px;height:0.9px;background:#a8c8a8;opacity:0.62"></div>
<div style="left:599px;top:189.35px;width:7px;height:0.9px;background:#c8e8f8;opacity:0.62"></div>
<div style="left:606px;top:189.35px;width:2px;height:0.9px;background:#e0c870;opacity:0.62"></div>
<div style="left:592px;top:192.25px;width:9px;height:0.9px;background:#98c898;opacity:0.62"></div>
<div style="left:601px;top:192.25px;width:3px;height:0.9px;background:#9888c8;opacity:0.62"></div>
<div style="left:593px;top:194.55px;width:3px;height:0.9px;background:#88b868;opacity:0.62"></div>
<div style="left:593px;top:195.55px;width:3px;height:0.9px;background:#e0c870;opacity:0.62"></div>
<div style="left:592px;top:198.35px;width:4px;height:0.9px;background:#b8b8f0;opacity:0.62"></div>
<div style="left:593px;top:199.25px;width:8px;height:0.9px;background:#a8c8a8;opacity:0.62"></div>
<div style="left:601px;top:199.25px;width:4px;height:0.9px;background:#e0c870;opacity:0.62"></div>
<div style="left:605px;top:199.25px;width:5px;height:0.9px;background:#a8d8f0;opacity:0.62"></div>
<div style="left:592px;top:201.55px;width:18px;height:0.9px;background:#d0e4d0;opacity:0.62"></div>
<div style="left:593px;top:202.55px;width:7px;height:0.9px;background:#d0b8e0;opacity:0.62"></div>
<div style="left:258px;top:287.5px;width:358px;height:84px;background:#eff0f1"></div>
<svg style="left:262px;top:291px" width="4" height="4" stroke="#9a9c9e" stroke-width="0.6"><path d="M0.3 0.3 L3.7 3.7 M3.7 0.3 L0.3 3.7"/></svg>
<svg style="left:262px;top:301.2px" width="4" height="4" fill="none" stroke="#9a9c9e" stroke-width="0.6"><path d="M2 0.3 L3.7 2 L2 3.7 L0.3 2 Z"/></svg>
<div class="t" style="left:265.3px;top:342.8px;width:0;height:0;"><div style="position:absolute;left:0;top:0;transform-origin:0 0;transform:rotate(-90deg) translate(-100%,-50%);font-size:6.75px;line-height:10px;color:#232627;white-space:pre">Terminal</div></div>
<div style="left:258.2px;top:288.5px;width:13px;height:83px;border-left:0.8px solid #d6d8da;border-bottom:0.8px solid #d6d8da"></div>
<div style="left:271px;top:289px;width:344px;height:82px;background:#232627;border-top:1px solid #141617;border-right:1px solid #141617"></div>
<div style="left:274px;top:290.8px;width:0.9px;height:5.5px;background:#9a9c9e"></div>
<svg style="left:276.3px;top:291.3px" width="6" height="5" fill="none" stroke="#1cdc9a" stroke-width="1"><path d="M0.3 2.5 H4.6 M2.6 0.6 L4.6 2.5 L2.6 4.4"/></svg>
<div class="t" style="left:276.2px;top:290.2px;font-family:'Liberation Mono', monospace;font-size:5.83px;line-height:8px;font-weight:bold">   <span style="color:#1abc9c">tokodon</span> <span style="color:#3daee9">git:(</span><span style="color:#ed4a30">work/carl/remember-selected-account</span><span style="color:#3daee9">)</span> <span style="color:#fdbc4b">✗</span> <span style="color:#c8cacc">s</span></div>
<div style="left:472.5px;top:290px;width:3.5px;height:6.5px;border:0.8px solid #d0d2d4"></div>
<div style="left:608.6px;top:291px;width:4px;height:77.5px;background:#4d5254;border-radius:2px;border:0.6px solid #6b7072"></div>
<svg style="left:620.3px;top:79.2px" width="6" height="6" fill="none" stroke="#232627" stroke-width="0.7"><rect x="0.5" y="0.5" width="5" height="5"/><path d="M2 2.5 L3.5 3.5 L2 4.5"/></svg>
<div class="t" style="left:621.8px;top:87.8px;width:0;height:0;"><div style="position:absolute;left:0;top:0;transform-origin:0 0;transform:rotate(90deg) translate(0,-50%);font-size:6.6px;line-height:10px;color:#232627;white-space:pre">External Scripts</div></div>
<div style="left:121.3px;top:373px;width:46.6px;height:14.6px;background:#dcdee0;border-radius:2px"></div>
<div style="left:126.2px;top:377.2px;width:7.1px;height:6.4px;background:#232627"></div>
<svg style="left:128px;top:378.6px" width="4" height="4" fill="none" stroke="#c8cacc" stroke-width="0.55"><path d="M0.8 0.4 L2.4 2 L0.8 3.6"/></svg>
<div class="t" style="left:136px;top:376.40px;font-size:6.75px;line-height:10px;color:#232627;">Terminal</div>
<svg style="left:175.5px;top:377.2px" width="5" height="7" fill="none" stroke="#232627" stroke-width="0.7"><path d="M1.6 0.6 H0.6 V6 H1.6 M3.4 0.6 H4.4 V6 H3.4"/></svg>
<div class="t" style="left:183.2px;top:376.40px;font-size:6.75px;line-height:10px;color:#232627;">Code Browser</div>
<svg style="left:239.5px;top:377.2px" width="6" height="6" fill="none" stroke="#232627" stroke-width="0.7"><rect x="0.5" y="0.5" width="5" height="5"/><path d="M1.5 1.5 L4.5 4.5 M4.5 1.5 L1.5 4.5"/></svg>
<div class="t" style="left:248.2px;top:376.40px;font-size:6.75px;line-height:10px;color:#232627;">Problems</div>
</body></html>
